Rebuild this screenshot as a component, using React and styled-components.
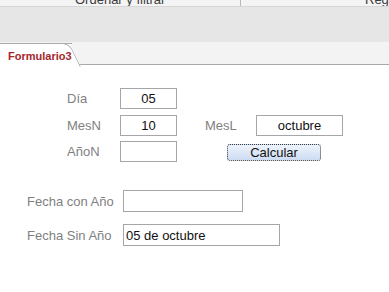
import React from 'react';
import styled, { createGlobalStyle } from 'styled-components';

const GlobalStyle = createGlobalStyle`
  html, body {
    margin: 0;
    padding: 0;
    background: #ffffff;
    font-family: "Liberation Sans", Arial, sans-serif;
  }
`;

const Page = styled.div`
  width: 389px;
  height: 292px;
  overflow: hidden;
  background: #ffffff;
`;

const TopStrip = styled.div`
  display: flex;
  align-items: flex-end;
  height: 6px;
  overflow: hidden;
  background: #f4f4f4;
  border-bottom: 1px solid #d6d6d6;
`;

const StripGroup = styled.div`
  width: ${({ width }) => width};
  flex: ${({ grow }) => (grow ? 1 : 'none')};
  padding-left: ${({ indent }) => indent}px;
  box-sizing: border-box;
  border-right: ${({ divider }) => (divider ? '1px solid #b8b8b8' : 'none')};
  height: 6px;
  display: flex;
  align-items: flex-end;
`;

const StripText = styled.span`
  font-size: 13px;
  line-height: 14px;
  margin-bottom: -1px;
  color: #3c3c3c;
  white-space: nowrap;
`;

const Ribbon = styled.div`
  height: 35px;
  background: #e6e6e6;
`;

const TabBar = styled.div`
  display: flex;
  align-items: flex-end;
  height: 22px;
  background: #f3f3f3;
  border-bottom: 1px solid #a9a9a9;
`;

const Tab = styled.div`
  position: relative;
  width: 72px;
  height: 22px;
  box-sizing: border-box;
  padding: 6px 0 0 8px;
  background: #ffffff;
  border-top: 1px solid #a9a9a9;
  font-size: 11px;
  font-weight: bold;
  color: #a4262c;
  margin-bottom: -1px;

  &::after {
    content: '';
    position: absolute;
    top: -1px;
    right: -9px;
    width: 14px;
    height: 23px;
    background: #ffffff;
    border-top: 1px solid #a9a9a9;
    border-right: 1px solid #a9a9a9;
    border-top-right-radius: 7px;
    transform: skewX(26deg);
    transform-origin: bottom left;
    z-index: 0;
  }
`;

const TabLabel = styled.span`
  position: relative;
  z-index: 1;
`;

const Form = styled.div`
  padding-top: 23px;
`;

const TopGrid = styled.div`
  display: grid;
  grid-template-columns: 53px 56px 29px 51px 87px;
  grid-auto-rows: 21px;
  row-gap: 5.5px;
  padding-left: 67px;
  align-items: center;
`;

const BottomGrid = styled.div`
  display: grid;
  grid-template-columns: 96px auto;
  grid-auto-rows: 22px;
  row-gap: 12px;
  padding-left: 27px;
  margin-top: 28px;
  align-items: center;
  justify-items: start;
`;

const Label = styled.label`
  font-size: 13px;
  color: #7f7f7f;
  white-space: nowrap;
  grid-column: ${({ col }) => col || 'auto'};
`;

const Field = styled.input`
  width: ${({ w }) => w}px;
  height: ${({ h }) => h || 21}px;
  box-sizing: border-box;
  border: 1px solid #a6a6a6;
  padding: 0 2px;
  margin: 0;
  font-family: "Liberation Sans", Arial, sans-serif;
  font-size: 13px;
  color: #111111;
  background: #ffffff;
  text-align: ${({ align }) => align || 'left'};
  outline: none;
  grid-column: ${({ col }) => col || 'auto'};
`;

const Button = styled.button`
  grid-column: 4 / 6;
  justify-self: start;
  margin-left: 22px;
  margin-top: 1px;
  width: 94px;
  height: 17px;
  padding: 0;
  box-sizing: border-box;
  border: 1px dotted #3a3a3a;
  border-radius: 3px;
  background: linear-gradient(#eef3fc, #cddcf3);
  font-family: "Liberation Sans", Arial, sans-serif;
  font-size: 13px;
  line-height: 15px;
  color: #111111;
`;

export default function App() {
  return (
    <Page>
      <GlobalStyle />
      <TopStrip>
        <StripGroup width="241px" indent={75} divider>
          <StripText>Ordenar y filtrar</StripText>
        </StripGroup>
        <StripGroup grow indent={124}>
          <StripText>Registros</StripText>
        </StripGroup>
      </TopStrip>
      <Ribbon />
      <TabBar>
        <Tab>
          <TabLabel>Formulario3</TabLabel>
        </Tab>
      </TabBar>
      <Form>
        <TopGrid>
          <Label>Día</Label>
          <Field w={57} align="center" readOnly value="05" />
          <span />
          <span />
          <span />

          <Label>MesN</Label>
          <Field w={57} align="center" readOnly value="10" />
          <Label col="4">MesL</Label>
          <Field w={87} align="center" readOnly value="octubre" />

          <Label>AñoN</Label>
          <Field w={57} readOnly value="" />
          <Button>Calcular</Button>
        </TopGrid>
        <BottomGrid>
          <Label>Fecha con Año</Label>
          <Field w={120} h={22} readOnly value="" />
          <Label>Fecha Sin Año</Label>
          <Field w={157} h={22} readOnly value="05 de octubre" />
        </BottomGrid>
      </Form>
    </Page>
  );
}
